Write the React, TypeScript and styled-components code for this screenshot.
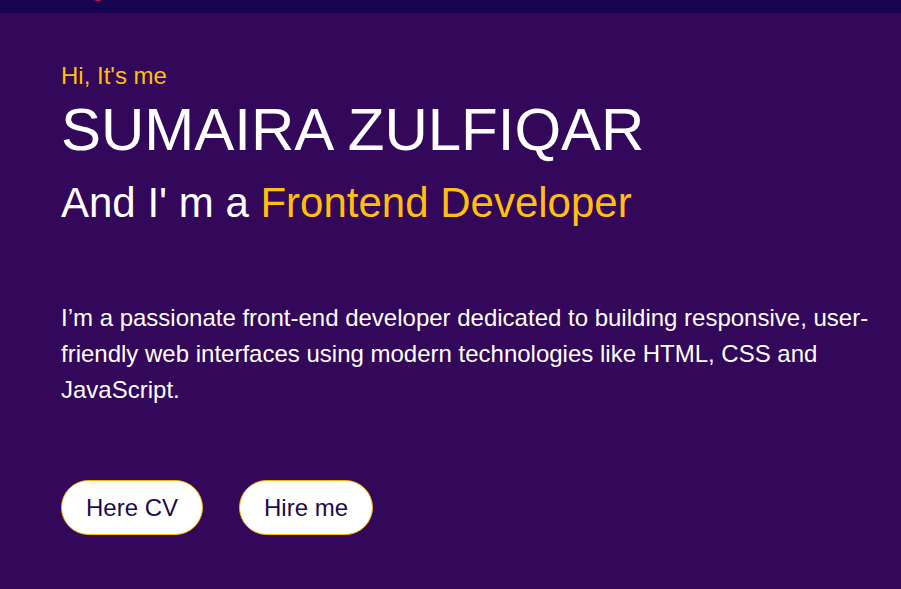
import React from "react";
import styled, { createGlobalStyle } from "styled-components";

const GlobalStyle = createGlobalStyle`
  html, body {
    margin: 0;
    padding: 0;
    background: #33075a;
  }
  body {
    font-family: "Liberation Sans", Arial, sans-serif;
  }
`;

const Page = styled.div`
  width: 901px;
  height: 589px;
  background: #33075a;
  overflow: hidden;
  display: flex;
  flex-direction: column;
`;

const NavBar = styled.header`
  height: 13px;
  flex: none;
  background: #170551;
  overflow: hidden;
  display: flex;
  align-items: flex-end;
  padding-left: 91px;
`;

const LogoDot = styled.div`
  width: 14px;
  height: 14px;
  border-radius: 50%;
  background: radial-gradient(circle at 50% 60%, #ff2a3c 0%, #d4104a 70%, #a0104f 100%);
  margin-bottom: 12px;
  flex: none;
`;

const Hero = styled.section`
  padding: 49px 20px 0 61px;
  display: flex;
  flex-direction: column;
  align-items: flex-start;
`;

const Greeting = styled.p`
  margin: 0;
  font-size: 24px;
  line-height: 28px;
  color: #ffbf0f;
`;

const Name = styled.h1`
  margin: 5px 0 0;
  font-size: 60px;
  line-height: 69px;
  font-weight: 400;
  color: #ffffff;
`;

const Role = styled.h2`
  margin: 15px 0 0;
  font-size: 42px;
  line-height: 48px;
  font-weight: 400;
  color: #ffffff;
`;

const Highlight = styled.span`
  color: #ffbf0f;
`;

const Intro = styled.p`
  margin: 73px 0 0;
  font-size: 24px;
  line-height: 36px;
  color: #ffffff;
`;

const Actions = styled.div`
  margin-top: 72px;
  display: flex;
  gap: 36px;
`;

const PillButton = styled.button`
  height: 55px;
  padding: 0 24px;
  border: 1px solid #f4b400;
  border-radius: 28px;
  background: #ffffff;
  color: #1c0b4f;
  font-family: "Liberation Sans", Arial, sans-serif;
  font-size: 24px;
  cursor: pointer;
`;

export default function App() {
  return (
    <>
      <GlobalStyle />
      <Page>
        <NavBar>
          <LogoDot />
        </NavBar>
        <Hero>
          <Greeting>Hi, It's me</Greeting>
          <Name>SUMAIRA ZULFIQAR</Name>
          <Role>
            And I' m a <Highlight>Frontend Developer</Highlight>
          </Role>
          <Intro>
            I’m a passionate front-end developer dedicated to building responsive, user-friendly web
            interfaces using modern technologies like HTML, CSS and JavaScript.
          </Intro>
          <Actions>
            <PillButton>Here CV</PillButton>
            <PillButton>Hire me</PillButton>
          </Actions>
        </Hero>
      </Page>
    </>
  );
}
